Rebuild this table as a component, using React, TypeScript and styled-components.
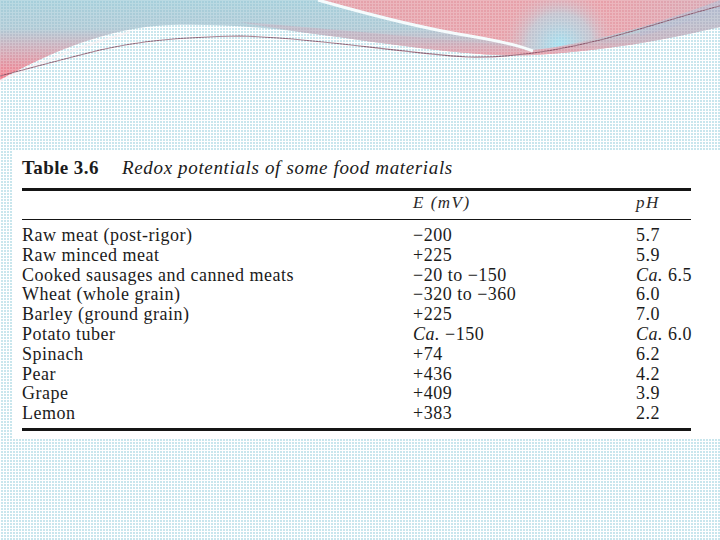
import React from "react";
import styled, { createGlobalStyle } from "styled-components";

const GlobalStyle = createGlobalStyle`
  html, body {
    margin: 0;
    padding: 0;
  }
  body {
    background-color: #c9e6ed;
    background-image:
      linear-gradient(to right, #ffffff 1px, transparent 1px),
      linear-gradient(to bottom, #ffffff 1px, transparent 1px);
    background-size: 3px 3px;
    font-family: "Liberation Serif", "Times New Roman", serif;
    color: #1b1b1b;
  }
`;

const Page = styled.div`
  width: 720px;
  height: 540px;
  overflow: hidden;
  display: flex;
  flex-direction: column;
`;

const Banner = styled.div`
  height: 150px;
  flex: none;
`;

const Panel = styled.section`
  margin-left: 12px;
  width: 708px;
  height: 289px;
  box-sizing: border-box;
  background: #ffffff;
  padding: 7px 0 0 10px;
  flex: none;
`;

const Table = styled.div`
  width: 669px;
`;

const Caption = styled.div`
  display: flex;
  align-items: baseline;
  font-size: 19px;
  line-height: 22px;
  height: 22px;
`;

const CaptionLabel = styled.span`
  font-weight: bold;
  width: 100px;
  flex: none;
  letter-spacing: 0.4px;
`;

const CaptionTitle = styled.span`
  font-style: italic;
  letter-spacing: 0.65px;
`;

const Rule = styled.div<{ $thick?: boolean; $gap?: number }>`
  height: ${(p) => (p.$thick ? 3 : 1)}px;
  background: #151515;
  margin-top: ${(p) => p.$gap ?? 0}px;
`;

const Grid = styled.div`
  display: grid;
  grid-template-columns: 391px 223px 1fr;
`;

const HeadRow = styled(Grid)`
  font-size: 17px;
  line-height: 16px;
  height: 28px;
  font-style: italic;
  letter-spacing: 1.5px;
  box-sizing: border-box;
  padding-top: 4px;
  color: #2a2a2a;
`;

const Body = styled.div`
  padding-top: 6px;
  padding-bottom: 4px;
`;

const Row = styled(Grid)`
  font-size: 18px;
  line-height: 19.8px;
  height: 19.8px;
  letter-spacing: 0.5px;
  white-space: nowrap;
`;

const Cell = styled.span``;

const Em = styled.i`
  font-style: italic;
`;

type R = { name: string; e: React.ReactNode; ph: React.ReactNode };

const rows: R[] = [
  { name: "Raw meat (post-rigor)", e: "\u2212200", ph: "5.7" },
  { name: "Raw minced meat", e: "+225", ph: "5.9" },
  { name: "Cooked sausages and canned meats", e: "\u221220 to \u2212150", ph: <><Em>Ca.</Em> 6.5</> },
  { name: "Wheat (whole grain)", e: "\u2212320 to \u2212360", ph: "6.0" },
  { name: "Barley (ground grain)", e: "+225", ph: "7.0" },
  { name: "Potato tuber", e: <><Em>Ca.</Em> {"\u2212150"}</>, ph: <><Em>Ca.</Em> 6.0</> },
  { name: "Spinach", e: "+74", ph: "6.2" },
  { name: "Pear", e: "+436", ph: "4.2" },
  { name: "Grape", e: "+409", ph: "3.9" },
  { name: "Lemon", e: "+383", ph: "2.2" },
];

function Waves() {
  return (
    <svg width="720" height="90" viewBox="0 0 720 90" style={{ display: "block" }}>
      <defs>
        <linearGradient id="baseG" x1="0" y1="0" x2="0" y2="80" gradientUnits="userSpaceOnUse">
          <stop offset="0" stopColor="#a6cfdb" />
          <stop offset="0.35" stopColor="#adc9d5" />
          <stop offset="0.65" stopColor="#d3a7b4" />
          <stop offset="1" stopColor="#f67a88" />
        </linearGradient>
        <linearGradient id="pinkG" x1="320" y1="0" x2="720" y2="0" gradientUnits="userSpaceOnUse">
          <stop offset="0" stopColor="#e4a2ab" />
          <stop offset="0.7" stopColor="#e8a0a9" />
          <stop offset="1" stopColor="#d8a8b4" />
        </linearGradient>
        <radialGradient id="glow" cx="560" cy="46" r="60" gradientUnits="userSpaceOnUse">
          <stop offset="0" stopColor="#a0dff0" />
          <stop offset="0.55" stopColor="#b2cfdc" stopOpacity="0.7" />
          <stop offset="1" stopColor="#e6a4ad" stopOpacity="0" />
        </radialGradient>
        <linearGradient id="bandG" x1="0" y1="20" x2="0" y2="58" gradientUnits="userSpaceOnUse">
          <stop offset="0" stopColor="#b6bccb" />
          <stop offset="0.55" stopColor="#c4b0be" />
          <stop offset="1" stopColor="#ec9aa5" />
        </linearGradient>
        <pattern id="grid" width="3" height="3" patternUnits="userSpaceOnUse">
          <path d="M0,0.5H3M0.5,0V3" stroke="#ffffff" strokeWidth="1" />
        </pattern>
      </defs>
      <path
        d="M0,0 H720 V27 C680,36 620,50 533,55 C470,58 380,42 300,32 C260,27 220,24 170,25 C110,27 50,52 0,80 Z"
        fill="url(#baseG)"
      />
      <path
        d="M240,22 C300,26 380,34 470,42 C500,45 520,48 533,50 C600,44 660,28 720,14 V27 C680,36 620,50 533,55 C470,58 380,42 300,32 C275,28 255,25 240,22 Z"
        fill="url(#bandG)"
      />
      <path
        d="M320,0 C360,10 420,27 470,35 C500,40 520,45 533,50 C590,44 650,24 720,6 V0 Z"
        fill="url(#pinkG)"
      />
      <path
        d="M320,0 C360,10 420,27 470,35 C500,40 520,45 533,50 C590,44 650,24 720,6 V0 Z"
        fill="url(#glow)"
      />
      <path
        d="M640,28 C670,18 700,8 720,0 V14 C690,22 665,30 640,36 Z"
        fill="#b5b5c9"
        opacity="0.8"
      />
      <path
        d="M318,0 C360,12 420,28 470,36 C500,41 520,46 533,51"
        stroke="#f4fbfd"
        strokeWidth="3"
        fill="none"
      />
      <path
        d="M0,81 C40,62 80,46 130,32"
        stroke="#f8eef1"
        strokeWidth="2"
        fill="none"
        opacity="0.7"
      />
      <path
        d="M0,76 C30,68 60,60 100,50 C140,41 180,37 240,36 C320,38 400,53 467,57 C510,58 560,50 600,40 C640,30 680,16 720,6"
        stroke="#7a3f55"
        strokeWidth="1.1"
        fill="none"
        opacity="0.8"
      />
      <rect width="720" height="90" fill="url(#grid)" opacity="0.22" />
    </svg>
  );
}

export default function App() {
  return (
    <>
      <GlobalStyle />
      <Page>
        <Banner>
          <Waves />
        </Banner>
        <Panel>
          <Table>
            <Caption>
              <CaptionLabel>Table 3.6</CaptionLabel>
              <CaptionTitle>Redox potentials of some food materials</CaptionTitle>
            </Caption>
            <Rule $thick $gap={9} />
            <HeadRow>
              <Cell />
              <Cell>E (mV)</Cell>
              <Cell>pH</Cell>
            </HeadRow>
            <Rule />
            <Body>
              {rows.map((r) => (
                <Row key={r.name}>
                  <Cell>{r.name}</Cell>
                  <Cell>{r.e}</Cell>
                  <Cell>{r.ph}</Cell>
                </Row>
              ))}
            </Body>
            <Rule $thick />
          </Table>
        </Panel>
      </Page>
    </>
  );
}
